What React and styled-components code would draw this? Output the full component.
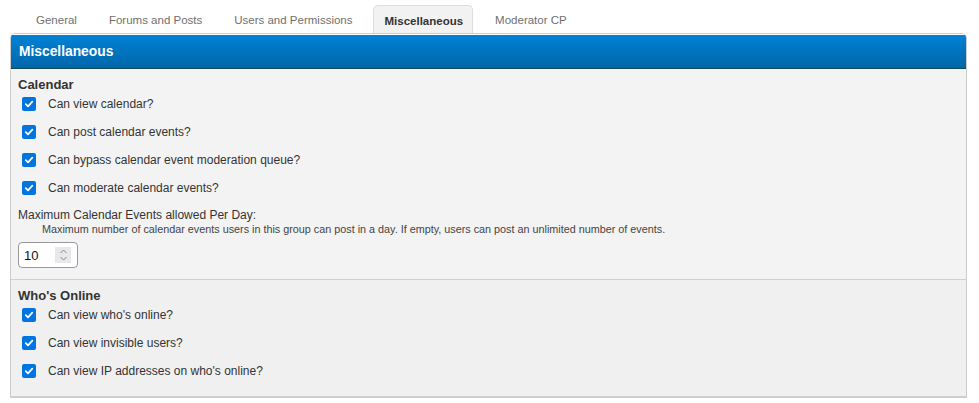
import React from "react";
import styled, { createGlobalStyle } from "styled-components";

const Global = createGlobalStyle`
  html, body { margin: 0; padding: 0; background: #fff; }
  body { font-family: "Liberation Sans", Arial, sans-serif; color: #333; }
`;

const Page = styled.div`
  width: 979px;
  height: 403px;
  overflow: hidden;
  padding: 5px 12px 0 10px;
  box-sizing: border-box;
`;

const Tabs = styled.ul`
  display: flex;
  list-style: none;
  margin: 0 0 0 10px;
  padding: 0;
  height: 28px;
  align-items: stretch;
`;

const Tab = styled.li`
  display: flex;
  align-items: center;
  padding: ${(p) => (p.$active ? "2px 9px 0 10px" : "0 15px")};
  margin: ${(p) => (p.$active ? "0 6px 0 5px" : "0")};
  font-size: 11.5px;
  color: ${(p) => (p.$active ? "#333" : "#707070")};
  font-weight: ${(p) => (p.$active ? "bold" : "normal")};
  background: ${(p) => (p.$active ? "#f2f2f2" : "transparent")};
  border: 1px solid ${(p) => (p.$active ? "#ddd" : "transparent")};
  border-bottom: none;
  border-radius: 5px 5px 0 0;
  box-sizing: border-box;
`;

const Panel = styled.div`
  border: 1px solid #ccc;
  border-radius: 5px 5px 0 0;
  background: #f3f3f3;
  overflow: hidden;
`;

const Header = styled.div`
  height: 33px;
  background: linear-gradient(to bottom, #0282d5, #0066a9);
  border-bottom: 1px solid #0f4a56;
  border-top: 1px solid #fff;
  color: #fff;
  font-weight: bold;
  font-size: 13.8px;
  display: flex;
  align-items: center;
  padding-left: 8px;
`;

const Section = styled.div`
  background: ${(p) => p.$bg};
  padding: 8px 7px ${(p) => p.$pb};
  border-bottom: 1px solid #d0d0d0;
`;

const SectionTitle = styled.div`
  font-weight: bold;
  font-size: 13px;
  line-height: 16px;
  color: #333;
  margin-bottom: 1px;
`;

const CheckList = styled.div`
  display: flex;
  flex-direction: column;
  gap: 8px;
`;

const CheckRow = styled.label`
  display: flex;
  align-items: center;
  height: 20px;
  padding-left: 4px;
  font-size: 12px;
  color: #333;
`;

const Box = styled.span`
  width: 14px;
  height: 14px;
  border-radius: 2px;
  background: #0075e0;
  display: flex;
  align-items: center;
  justify-content: center;
  margin-right: 12px;
`;

const FieldLabel = styled.div`
  font-size: 12px;
  line-height: 14px;
  color: #333;
  margin-top: 10px;
`;

const FieldDesc = styled.div`
  font-size: 10.8px;
  line-height: 13px;
  color: #444;
  padding-left: 24px;
  margin-top: 1px;
`;

const NumberBox = styled.div`
  margin-top: 6px;
  width: 60px;
  height: 26px;
  border: 1px solid #999;
  border-radius: 4px;
  background: #fff;
  display: flex;
  align-items: center;
  justify-content: space-between;
  box-sizing: border-box;
  padding: 0 6px 0 5px;
  font-size: 13px;
  color: #111;
`;

const Spinner = styled.span`
  width: 16px;
  height: 16px;
  background: #e8e8ec;
  display: flex;
  align-items: center;
  justify-content: center;
`;

function Check({ children }) {
  return (
    <CheckRow>
      <Box>
        <svg width="10" height="10" viewBox="0 0 10 10">
          <path d="M1.8 5.2 L4 7.3 L8.3 2.6" fill="none" stroke="#fff" strokeWidth="1.8" strokeLinecap="round" strokeLinejoin="round" />
        </svg>
      </Box>
      {children}
    </CheckRow>
  );
}

export default function App() {
  return (
    <Page>
      <Global />
      <Tabs>
        <Tab>General</Tab>
        <Tab>Forums and Posts</Tab>
        <Tab>Users and Permissions</Tab>
        <Tab $active>Miscellaneous</Tab>
        <Tab>Moderator CP</Tab>
      </Tabs>
      <Panel>
        <Header>Miscellaneous</Header>
        <Section $bg="#f3f3f3" $pb="11px">
          <SectionTitle>Calendar</SectionTitle>
          <CheckList>
            <Check>Can view calendar?</Check>
            <Check>Can post calendar events?</Check>
            <Check>Can bypass calendar event moderation queue?</Check>
            <Check>Can moderate calendar events?</Check>
          </CheckList>
          <FieldLabel>Maximum Calendar Events allowed Per Day:</FieldLabel>
          <FieldDesc>
            Maximum number of calendar events users in this group can post in a day. If empty, users can post an unlimited number of events.
          </FieldDesc>
          <NumberBox>
            10
            <Spinner>
              <svg width="9" height="14" viewBox="0 0 9 14">
                <path d="M1.5 5 L4.5 2 L7.5 5 M1.5 9 L4.5 12 L7.5 9" fill="none" stroke="#888" strokeWidth="1" />
              </svg>
            </Spinner>
          </NumberBox>
        </Section>
        <Section $bg="#f0f0f0" $pb="15px">
          <SectionTitle>Who's Online</SectionTitle>
          <CheckList>
            <Check>Can view who's online?</Check>
            <Check>Can view invisible users?</Check>
            <Check>Can view IP addresses on who's online?</Check>
          </CheckList>
        </Section>
      </Panel>
    </Page>
  );
}
